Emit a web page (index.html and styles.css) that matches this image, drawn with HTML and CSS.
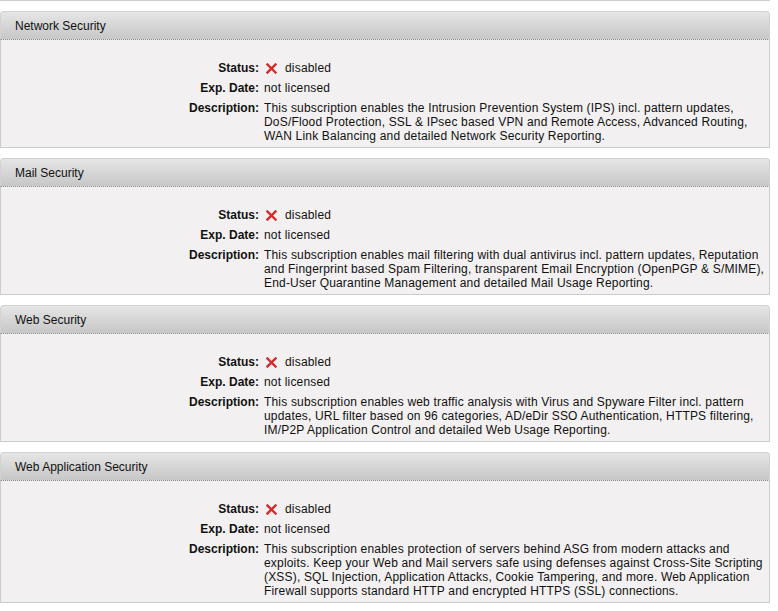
FILE: index.html
```html
<!DOCTYPE html>
<html>
<head>
<meta charset="utf-8">
<link rel="stylesheet" href="styles.css">
</head>
<body>
<div class="page">
  <div class="prev-edge"></div>

  <section class="panel">
    <div class="panel-head">Network Security</div>
    <div class="panel-body">
      <div class="label">Status:</div>
      <div class="value status"><svg class="xicon" width="11" height="11" viewBox="0 0 11 11"><path d="M1.5 1.5 L9.5 9.5 M9.5 1.5 L1.5 9.5" stroke="#d42b2b" stroke-width="2.4" stroke-linecap="square"/></svg><span>disabled</span></div>
      <div class="label">Exp. Date:</div>
      <div class="value">not licensed</div>
      <div class="label">Description:</div>
      <div class="value desc">This subscription enables the Intrusion Prevention System (IPS) incl. pattern updates,<br>DoS/Flood Protection, SSL &amp; IPsec based VPN and Remote Access, Advanced Routing,<br>WAN Link Balancing and detailed Network Security Reporting.</div>
    </div>
  </section>

  <section class="panel">
    <div class="panel-head">Mail Security</div>
    <div class="panel-body">
      <div class="label">Status:</div>
      <div class="value status"><svg class="xicon" width="11" height="11" viewBox="0 0 11 11"><path d="M1.5 1.5 L9.5 9.5 M9.5 1.5 L1.5 9.5" stroke="#d42b2b" stroke-width="2.4" stroke-linecap="square"/></svg><span>disabled</span></div>
      <div class="label">Exp. Date:</div>
      <div class="value">not licensed</div>
      <div class="label">Description:</div>
      <div class="value desc">This subscription enables mail filtering with dual antivirus incl. pattern updates, Reputation<br>and Fingerprint based Spam Filtering, transparent Email Encryption (OpenPGP &amp; S/MIME),<br>End-User Quarantine Management and detailed Mail Usage Reporting.</div>
    </div>
  </section>

  <section class="panel">
    <div class="panel-head">Web Security</div>
    <div class="panel-body">
      <div class="label">Status:</div>
      <div class="value status"><svg class="xicon" width="11" height="11" viewBox="0 0 11 11"><path d="M1.5 1.5 L9.5 9.5 M9.5 1.5 L1.5 9.5" stroke="#d42b2b" stroke-width="2.4" stroke-linecap="square"/></svg><span>disabled</span></div>
      <div class="label">Exp. Date:</div>
      <div class="value">not licensed</div>
      <div class="label">Description:</div>
      <div class="value desc">This subscription enables web traffic analysis with Virus and Spyware Filter incl. pattern<br>updates, URL filter based on 96 categories, AD/eDir SSO Authentication, HTTPS filtering,<br>IM/P2P Application Control and detailed Web Usage Reporting.</div>
    </div>
  </section>

  <section class="panel">
    <div class="panel-head">Web Application Security</div>
    <div class="panel-body">
      <div class="label">Status:</div>
      <div class="value status"><svg class="xicon" width="11" height="11" viewBox="0 0 11 11"><path d="M1.5 1.5 L9.5 9.5 M9.5 1.5 L1.5 9.5" stroke="#d42b2b" stroke-width="2.4" stroke-linecap="square"/></svg><span>disabled</span></div>
      <div class="label">Exp. Date:</div>
      <div class="value">not licensed</div>
      <div class="label">Description:</div>
      <div class="value desc">This subscription enables protection of servers behind ASG from modern attacks and<br>exploits. Keep your Web and Mail servers safe using defenses against Cross-Site Scripting<br>(XSS), SQL Injection, Application Attacks, Cookie Tampering, and more. Web Application<br>Firewall supports standard HTTP and encrypted HTTPS (SSL) connections.</div>
    </div>
  </section>
</div>
</body>
</html>
```

FILE: styles.css
```css
html, body {
  margin: 0;
  padding: 0;
  background: #ffffff;
}

body {
  font-family: "Liberation Sans", Arial, Helvetica, sans-serif;
  font-size: 12px;
  color: #000;
}

.page {
  width: 770px;
  display: flex;
  flex-direction: column;
  gap: 10px;
}

.prev-edge {
  height: 1px;
  background: #cdcdcd;
}

.panel {
  display: flex;
  flex-direction: column;
}

.panel-head {
  box-sizing: border-box;
  height: 29px;
  line-height: 29px;
  padding-left: 14px;
  background: linear-gradient(to bottom, #e6e6e6 0%, #d6d6d6 50%, #c7c7c7 100%);
  border: 1px solid #d2d2d2;
  border-bottom: 1px dotted #8a8a8a;
  border-radius: 4px 4px 0 0;
  color: #111;
}

.panel-body {
  background: #f2f0f0;
  border: 1px solid #cccccc;
  border-top: none;
  padding: 18px 0 1px 0;
  display: grid;
  grid-template-columns: 258px 1fr;
  column-gap: 5px;
}

.label {
  font-weight: bold;
  text-align: right;
  line-height: 14px;
  padding: 3px 0;
  color: #111;
}

.value {
  line-height: 14px;
  padding: 3px 0;
  white-space: nowrap;
  color: #111;
  letter-spacing: 0.18px;
}

.status {
  display: flex;
  align-items: center;
  gap: 8px;
}

.xicon {
  margin-left: 2px;
  flex: none;
}
```
